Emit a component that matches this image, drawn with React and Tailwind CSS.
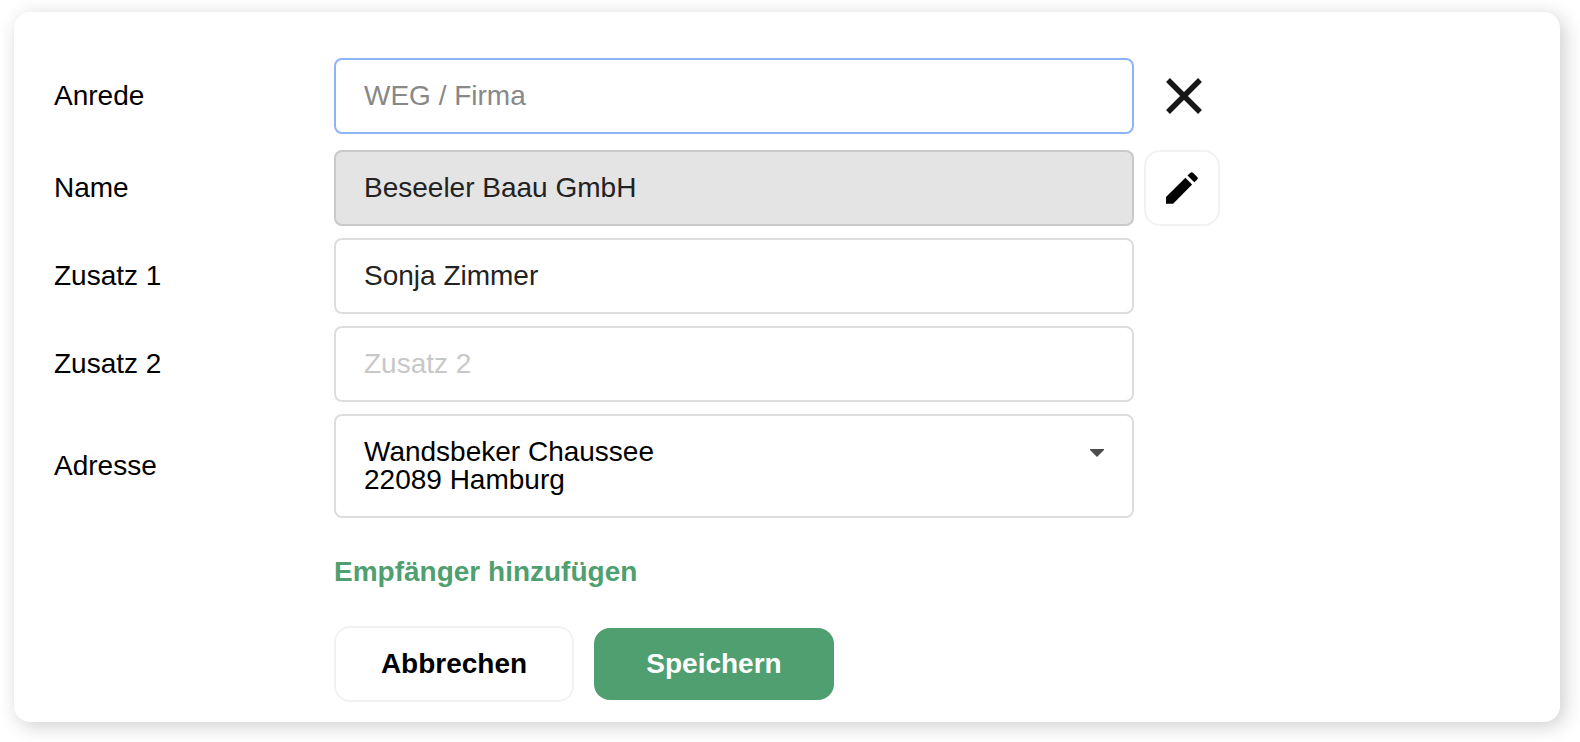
import { useState } from "react";

const addresses = [
  { street: "Wandsbeker Chaussee", city: "22089 Hamburg" },
];

const PencilIcon = () => (
  <svg width="32" height="32" viewBox="0 0 32 32" fill="currentColor">
    <path d="M0 24.9L19.4 5.8L26.1 12.5L7.1 31.8H0Z" />
    <path d="M21.5 3.6L24.4 0.8Q25.7 -0.4 27 0.8L31.2 5Q32.4 6.2 31.2 7.5L28.3 10.3Z" />
  </svg>
);

const Row = ({ id, label, children }) => {
  return (
    <div className="flex items-center">
      <label htmlFor={id} className="w-[280px] shrink-0">
        {label}
      </label>
      {children}
    </div>
  );
};

const inputClass =
  "h-[76px] w-full min-w-0 max-w-[800px] rounded-lg border-2 px-7 text-[28px] text-[#222] outline-none";

const App = () => {
  const [salutation, setSalutation] = useState("");
  const [name, setName] = useState("Beseeler Baau GmbH");
  const [extra1, setExtra1] = useState("Sonja Zimmer");
  const [extra2, setExtra2] = useState("");
  const [address, setAddress] = useState(0);
  const [editName, setEditName] = useState(false);

  const submitHandler = (e) => {
    e.preventDefault();
    setEditName(false);
  };

  return (
    <div className="bg-white pt-3 pr-5 pb-5 pl-3.5 font-['Liberation_Sans',Arial,sans-serif] text-[28px] leading-7 text-black">
      <form
        className="rounded-2xl bg-white px-10 pt-[46px] pb-5 shadow-[4px_4px_20px_rgba(0,0,0,0.2)]"
        onSubmit={submitHandler}
      >
        <div className="mb-4">
          <Row id="salutation" label="Anrede">
            <input
              id="salutation"
              type="text"
              value={salutation}
              onChange={(e) => setSalutation(e.target.value)}
              placeholder="WEG / Firma"
              className={`${inputClass} border-[#8db4f8] placeholder:text-[#888]`}
            />
            <button
              type="button"
              aria-label="Anrede löschen"
              className="ml-2.5 flex h-[76px] w-20 shrink-0 cursor-pointer items-center justify-center"
              onClick={() => setSalutation("")}
            >
              <svg width="36" height="36" viewBox="0 0 36 36" fill="none" stroke="#161616" strokeWidth="5.4">
                <path d="M2 2L34 34M34 2L2 34" />
              </svg>
            </button>
          </Row>
        </div>

        <div className="flex flex-col gap-3">
          <Row id="name" label="Name">
            <input
              id="name"
              type="text"
              value={name}
              onChange={(e) => setName(e.target.value)}
              readOnly={!editName}
              className={`${inputClass} ${editName ? "border-[#ddd]" : "border-[#c9c9c9] bg-[#e4e4e4]"}`}
            />
            <button
              type="button"
              aria-label="Name bearbeiten"
              className="ml-2.5 flex size-[76px] shrink-0 cursor-pointer items-center justify-center rounded-2xl border-2 border-[#f2f2f2]"
              onClick={() => setEditName(!editName)}
            >
              <PencilIcon />
            </button>
          </Row>

          <Row id="extra1" label="Zusatz 1">
            <input
              id="extra1"
              type="text"
              value={extra1}
              onChange={(e) => setExtra1(e.target.value)}
              placeholder="Zusatz 1"
              className={`${inputClass} border-[#ddd] placeholder:text-[#c8c8c8]`}
            />
            <div className="ml-2.5 w-[76px] shrink-0"></div>
          </Row>

          <Row id="extra2" label="Zusatz 2">
            <input
              id="extra2"
              type="text"
              value={extra2}
              onChange={(e) => setExtra2(e.target.value)}
              placeholder="Zusatz 2"
              className={`${inputClass} border-[#ddd] placeholder:text-[#c8c8c8]`}
            />
            <div className="ml-2.5 w-[76px] shrink-0"></div>
          </Row>

          <Row id="address" label="Adresse">
            {/* the native select lies over the two-line value */}
            <div className="relative flex w-full min-w-0 max-w-[800px] justify-between rounded-lg border-2 border-[#ddd] px-7 py-[22px]">
              <div aria-hidden="true">
                <p>{addresses[address].street}</p>
                <p>{addresses[address].city}</p>
              </div>
              <svg className="mt-2.5" width="14" height="10" viewBox="0 0 14 10" fill="#4d4d4d">
                <path d="M0 1H14V2L7 9L0 2Z" />
              </svg>
              <select
                id="address"
                value={address}
                onChange={(e) => setAddress(Number(e.target.value))}
                className="absolute inset-0 size-full cursor-pointer opacity-0"
              >
                {addresses.map((item, index) => (
                  <option key={index} value={index}>
                    {item.street}, {item.city}
                  </option>
                ))}
              </select>
            </div>
            <div className="ml-2.5 w-[76px] shrink-0"></div>
          </Row>
        </div>

        <div className="mt-10 flex flex-col items-start gap-10 pl-[280px]">
          <button type="button" className="cursor-pointer font-bold text-[#4f9f70]">
            Empfänger hinzufügen
          </button>

          <div className="flex items-center gap-5">
            <button
              type="button"
              className="h-[76px] w-60 cursor-pointer rounded-2xl border-2 border-[#f2f2f2] font-bold"
            >
              Abbrechen
            </button>
            <button
              type="submit"
              className="h-[72px] w-60 cursor-pointer rounded-2xl bg-[#4f9f70] font-bold text-white"
            >
              Speichern
            </button>
          </div>
        </div>
      </form>
    </div>
  );
};

export default App;
